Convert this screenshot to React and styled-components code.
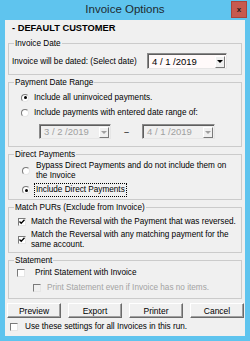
import React from 'react';
import styled, { createGlobalStyle } from 'styled-components';

const Global = createGlobalStyle`
  html, body {
    margin: 0;
    padding: 0;
    background: #5fc4ee;
  }
  body {
    font-family: "Liberation Sans", Arial, sans-serif;
    font-size: 8.2px;
    color: #000;
  }
`;

const Window = styled.div`
  width: 250px;
  height: 341px;
  box-sizing: border-box;
  padding: 0 5px 5px;
  background: #5fc4ee;
  display: flex;
  flex-direction: column;
`;

const TitleBar = styled.div`
  height: 20px;
  display: grid;
  grid-template-columns: 1fr auto 1fr;
  align-items: start;
`;

const Title = styled.div`
  grid-column: 2;
  font-size: 11.5px;
  line-height: 18px;
  color: #1e2a30;
`;

const Close = styled.div`
  grid-column: 3;
  justify-self: end;
  margin: 1px -2px 0 0;
  width: 16px;
  height: 17px;
  box-sizing: border-box;
  background: #c75a4f;
  border: 1px solid #a9453c;
  display: flex;
  align-items: center;
  justify-content: center;
  font-size: 8px;
  font-weight: bold;
  color: #2a1a18;
`;

const Client = styled.div`
  flex: 1;
  background: #f0f0f0;
  display: flex;
  flex-direction: column;
  padding: 3px 3px 0;
`;

const Header = styled.div`
  height: 11px;
  line-height: 11px;
  font-size: 9.3px;
  font-weight: bold;
  padding-left: 4px;
  margin-bottom: 9px;
`;

const Groups = styled.div`
  display: flex;
  flex-direction: column;
  gap: 7px;
`;

const Group = styled.div`
  position: relative;
  border: 1px solid #cbcbcb;
  padding: ${(p) => p.$pad};
`;

const Legend = styled.span`
  position: absolute;
  top: -6px;
  left: 5px;
  padding: 0 1px;
  background: #f0f0f0;
  line-height: 11px;
`;

const Row = styled.div`
  display: flex;
  align-items: center;
  height: ${(p) => p.$h}px;
  margin-top: ${(p) => p.$mt || 0}px;
  padding-left: ${(p) => p.$indent || 0}px;
  gap: ${(p) => p.$gap || 5}px;
  line-height: 10px;
  color: ${(p) => (p.$disabled ? '#a3a3a3' : '#000')};
`;

const DateRowGrid = styled.div`
  display: grid;
  grid-template-columns: 135px 80px;
  align-items: center;
  height: 16px;
`;

const DateBox = styled.div`
  width: ${(p) => p.$w}px;
  height: ${(p) => p.$h}px;
  box-sizing: border-box;
  border: 1px solid;
  border-color: #8a8a8a #e6e6e6 #e6e6e6 #8a8a8a;
  box-shadow: inset 1px 1px 0 #5e5e5e;
  background: ${(p) => (p.$disabled ? '#f0f0f0' : '#fffafa')};
  color: ${(p) => (p.$disabled ? '#a0a0a0' : '#000')};
  display: flex;
  align-items: center;
  justify-content: space-between;
  padding: 1px 1px 0 4px;
  font-size: 9.5px;
`;

const DropButton = styled.div`
  width: 10px;
  height: ${(p) => p.$h}px;
  box-sizing: border-box;
  background: #f0f0f0;
  border: 1px solid;
  border-color: #fff #7a7a7a #7a7a7a #fff;
  display: flex;
  align-items: center;
  justify-content: center;

  &::after {
    content: '';
    border-left: 3px solid transparent;
    border-right: 3px solid transparent;
    border-top: 3px solid ${(p) => (p.$disabled ? '#a0a0a0' : '#000')};
  }
`;

const Dash = styled.span`
  width: 21px;
  text-align: center;
  color: #000;
  padding-top: 3px;
`;

const Radio = styled.span`
  flex: none;
  width: 8px;
  height: 8px;
  box-sizing: border-box;
  border-radius: 50%;
  border: 1px solid;
  border-color: #7a7a7a #e6e6e6 #e6e6e6 #7a7a7a;
  background: #fff;
  display: flex;
  align-items: center;
  justify-content: center;

  &::after {
    content: '';
    display: ${(p) => (p.$on ? 'block' : 'none')};
    width: 3px;
    height: 3px;
    border-radius: 50%;
    background: #000;
  }
`;

const Box = styled.span`
  flex: none;
  width: 8px;
  height: 8px;
  box-sizing: border-box;
  border: 1px solid;
  border-color: #7a7a7a #e6e6e6 #e6e6e6 #7a7a7a;
  background: ${(p) => (p.$disabled ? '#f0f0f0' : '#fff')};
  display: flex;
  align-items: center;
  justify-content: center;
`;

const Focus = styled.span`
  outline: 1px dotted #000;
  outline-offset: 1px;
`;

const ButtonRow = styled.div`
  display: grid;
  grid-template-columns: repeat(4, 54px);
  column-gap: 7px;
  margin: 4px 0 0 -1px;
`;

const Button = styled.div`
  height: 15px;
  box-sizing: border-box;
  border: 1px solid;
  border-color: #fff #6a6a6a #6a6a6a #fff;
  box-shadow: inset -1px -1px 0 #a0a0a0;
  background: #f0f0f0;
  display: flex;
  align-items: center;
  justify-content: center;
  font-size: 8.5px;
`;

const Check = ({ on, disabled }) => (
  <Box $disabled={disabled}>
    {on && (
      <svg width="6" height="6" viewBox="0 0 6 6">
        <path d="M0.5 2.5 L2.2 4.3 L5.5 0.8" stroke="#000" strokeWidth="1.3" fill="none" />
      </svg>
    )}
  </Box>
);

const DatePicker = ({ value, w, h, disabled }) => (
  <DateBox $w={w} $h={h} $disabled={disabled}>
    <span>{value}</span>
    <DropButton $h={h - 4} $disabled={disabled} />
  </DateBox>
);

export default function App() {
  return (
    <Window>
      <Global />
      <TitleBar>
        <Title>Invoice Options</Title>
        <Close>x</Close>
      </TitleBar>
      <Client>
        <Header>- DEFAULT CUSTOMER</Header>
        <Groups>
          <Group $pad="9px 0 5px 3px">
            <Legend>Invoice Date</Legend>
            <DateRowGrid>
              <span>Invoice will be dated: (Select date)</span>
              <DatePicker value="4 / 1 /2019" w={80} h={16} />
            </DateRowGrid>
          </Group>

          <Group $pad="8px 0 7px 0">
            <Legend>Payment Date Range</Legend>
            <Row $h={13} $indent={12}>
              <Radio $on />
              <span>Include all uninvoiced payments.</span>
            </Row>
            <Row $h={13} $mt={2} $indent={12}>
              <Radio />
              <span>Include payments with entered date range of:</span>
            </Row>
            <Row $h={15} $mt={5} $indent={30} $gap={0}>
              <DatePicker value="3 / 2 /2019" w={72} h={15} disabled />
              <Dash>–</Dash>
              <DatePicker value="4 / 1 /2019" w={73} h={15} disabled />
            </Row>
          </Group>

          <Group $pad="6px 0 3px 0">
            <Legend>Direct Payments</Legend>
            <Row $h={20} $indent={13} $gap={6}>
              <Radio />
              <span>
                Bypass Direct Payments and do not include them on
                <br />
                the Invoice
              </span>
            </Row>
            <Row $h={12} $mt={3} $indent={13} $gap={6}>
              <Radio $on />
              <Focus>Include Direct Payments</Focus>
            </Row>
          </Group>

          <Group $pad="8px 0 2px 0">
            <Legend>Match PURs (Exclude from Invoice)</Legend>
            <Row $h={12} $indent={9}>
              <Check on />
              <span>Match the Reversal with the Payment that was reversed.</span>
            </Row>
            <Row $h={20} $mt={2} $indent={9}>
              <Check on />
              <span>
                Match the Reversal with any matching payment for the
                <br />
                same account.
              </span>
            </Row>
          </Group>

          <Group $pad="6px 0 4px 0">
            <Legend>Statement</Legend>
            <Row $h={12} $indent={8} $gap={10}>
              <Check />
              <span>Print Statement with Invoice</span>
            </Row>
            <Row $h={12} $mt={3} $indent={24} $gap={6} $disabled>
              <Check disabled />
              <span>Print Statement even if Invoice has no items.</span>
            </Row>
          </Group>
        </Groups>

        <ButtonRow>
          <Button>Preview</Button>
          <Button>Export</Button>
          <Button>Printer</Button>
          <Button>Cancel</Button>
        </ButtonRow>

        <Row $h={10} $mt={4} $indent={2} $gap={7}>
          <Check />
          <span>Use these settings for all Invoices in this run.</span>
        </Row>
      </Client>
    </Window>
  );
}
